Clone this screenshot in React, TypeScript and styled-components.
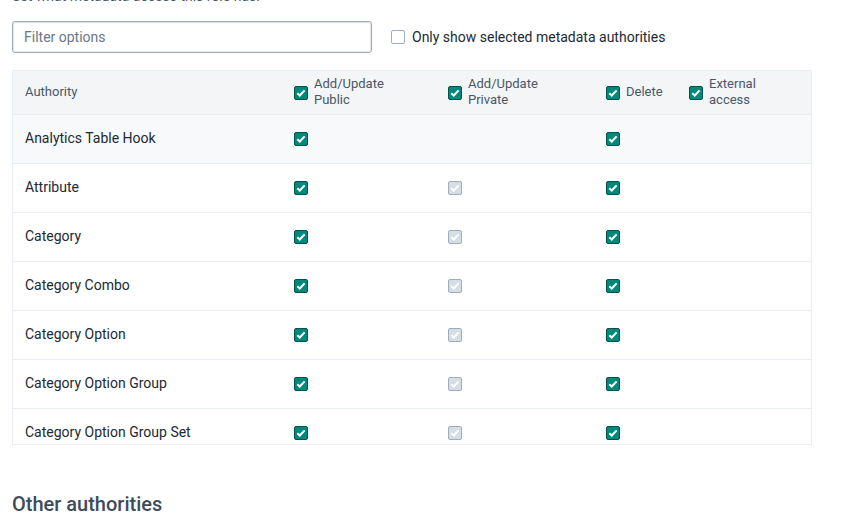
import React from "react";
import styled, { createGlobalStyle } from "styled-components";

const Global = createGlobalStyle`
  html, body { margin: 0; padding: 0; background: #ffffff; }
  body { font-family: Roboto, "Noto Sans", sans-serif; overflow: hidden; }
  * { box-sizing: border-box; }
`;

const Page = styled.div`
  padding: 0 12px;
  width: 851px;
  height: 513px;
  overflow: hidden;
`;

const Description = styled.p`
  margin: -14px 0 0;
  font-size: 14px;
  line-height: 20px;
  color: #4a5768;
`;

const Toolbar = styled.div`
  display: flex;
  align-items: center;
  gap: 19px;
  margin-top: 15px;
`;

const FilterInput = styled.input`
  width: 360px;
  height: 32px;
  border: 1px solid #a0adba;
  border-radius: 3px;
  padding: 0 11px;
  font-family: Roboto, sans-serif;
  font-size: 14px;
  color: #212934;
  box-shadow: inset 0 0 0 1px rgba(102, 113, 123, 0.15), inset 0 1px 2px 0 rgba(102, 113, 123, 0.1);
  &::placeholder { color: #6c7787; }
  outline: none;
`;

const ToggleLabel = styled.label`
  display: flex;
  align-items: center;
  gap: 7px;
  font-size: 14px;
  color: #212934;
`;

const Box = styled.span<{ $state: "on" | "off" | "disabled" }>`
  display: inline-flex;
  align-items: center;
  justify-content: center;
  flex: none;
  width: 14px;
  height: 14px;
  border-radius: 2px;
  border: 1px solid
    ${(p) => (p.$state === "on" ? "#00544a" : "#a0adba")};
  background: ${(p) => (p.$state === "on" ? "#00897b" : p.$state === "disabled" ? "#d5dde5" : "#ffffff")};
`;

const Check = ({ state }: { state: "on" | "off" | "disabled" }) => (
  <Box $state={state}>
    {state !== "off" && (
      <svg width="12" height="12" viewBox="0 0 12 12">
        <path d="M2.3 6.2 L4.8 8.5 L9.6 3.4" fill="none" stroke="#ffffff" strokeWidth="2" />
      </svg>
    )}
  </Box>
);

const TableWrap = styled.div`
  margin-top: 17px;
  width: 800px;
  height: 375px;
  border: 1px solid #e8edf2;
  overflow: hidden;
`;

const Row = styled.div<{ $variant?: "head" | "shaded" | "plain" }>`
  display: grid;
  grid-template-columns: 269px 154px 158px 83px 1fr;
  align-items: center;
  height: ${(p) => (p.$variant === "head" ? "44px" : "49px")};
  background: ${(p) =>
    p.$variant === "head" ? "#f3f5f7" : p.$variant === "shaded" ? "#f8f9fa" : "#ffffff"};
  border-bottom: 1px solid #e8edf2;
`;

const Cell = styled.div`
  padding-left: 12px;
  display: flex;
  align-items: center;
  gap: 6px;
`;

const HeadText = styled.span`
  font-size: 13px;
  line-height: 16px;
  color: #4a5768;
  margin-bottom: 2px;
`;

const NameText = styled.span`
  font-size: 14px;
  line-height: 16px;
  color: #212934;
  margin-bottom: 2px;
`;

const Heading = styled.h2`
  margin: 47px 0 0;
  font-size: 20px;
  font-weight: 500;
  line-height: 24px;
  color: #404b5a;
`;

type S = "on" | "off" | "disabled" | null;
const rows: { name: string; cells: S[] }[] = [
  { name: "Analytics Table Hook", cells: ["on", null, "on", null] },
  { name: "Attribute", cells: ["on", "disabled", "on", null] },
  { name: "Category", cells: ["on", "disabled", "on", null] },
  { name: "Category Combo", cells: ["on", "disabled", "on", null] },
  { name: "Category Option", cells: ["on", "disabled", "on", null] },
  { name: "Category Option Group", cells: ["on", "disabled", "on", null] },
  { name: "Category Option Group Set", cells: ["on", "disabled", "on", null] },
];

const headers: React.ReactNode[] = [
  <>Add/Update<br />Public</>,
  <>Add/Update<br />Private</>,
  <>Delete</>,
  <>External<br />access</>,
];

export default function App() {
  return (
    <Page>
      <Global />
      <Description>Set what metadata access this role has.</Description>
      <Toolbar>
        <FilterInput placeholder="Filter options" />
        <ToggleLabel>
          <Check state="off" />
          Only show selected metadata authorities
        </ToggleLabel>
      </Toolbar>
      <TableWrap>
        <Row $variant="head">
          <Cell>
            <HeadText>Authority</HeadText>
          </Cell>
          {headers.map((h, i) => (
            <Cell key={i}>
              <Check state="on" />
              <HeadText>{h}</HeadText>
            </Cell>
          ))}
        </Row>
        {rows.map((r, i) => (
          <Row key={r.name} $variant={i === 0 ? "shaded" : "plain"}>
            <Cell>
              <NameText>{r.name}</NameText>
            </Cell>
            {r.cells.map((c, j) => (
              <Cell key={j}>{c && <Check state={c} />}</Cell>
            ))}
          </Row>
        ))}
      </TableWrap>
      <Heading>Other authorities</Heading>
    </Page>
  );
}
